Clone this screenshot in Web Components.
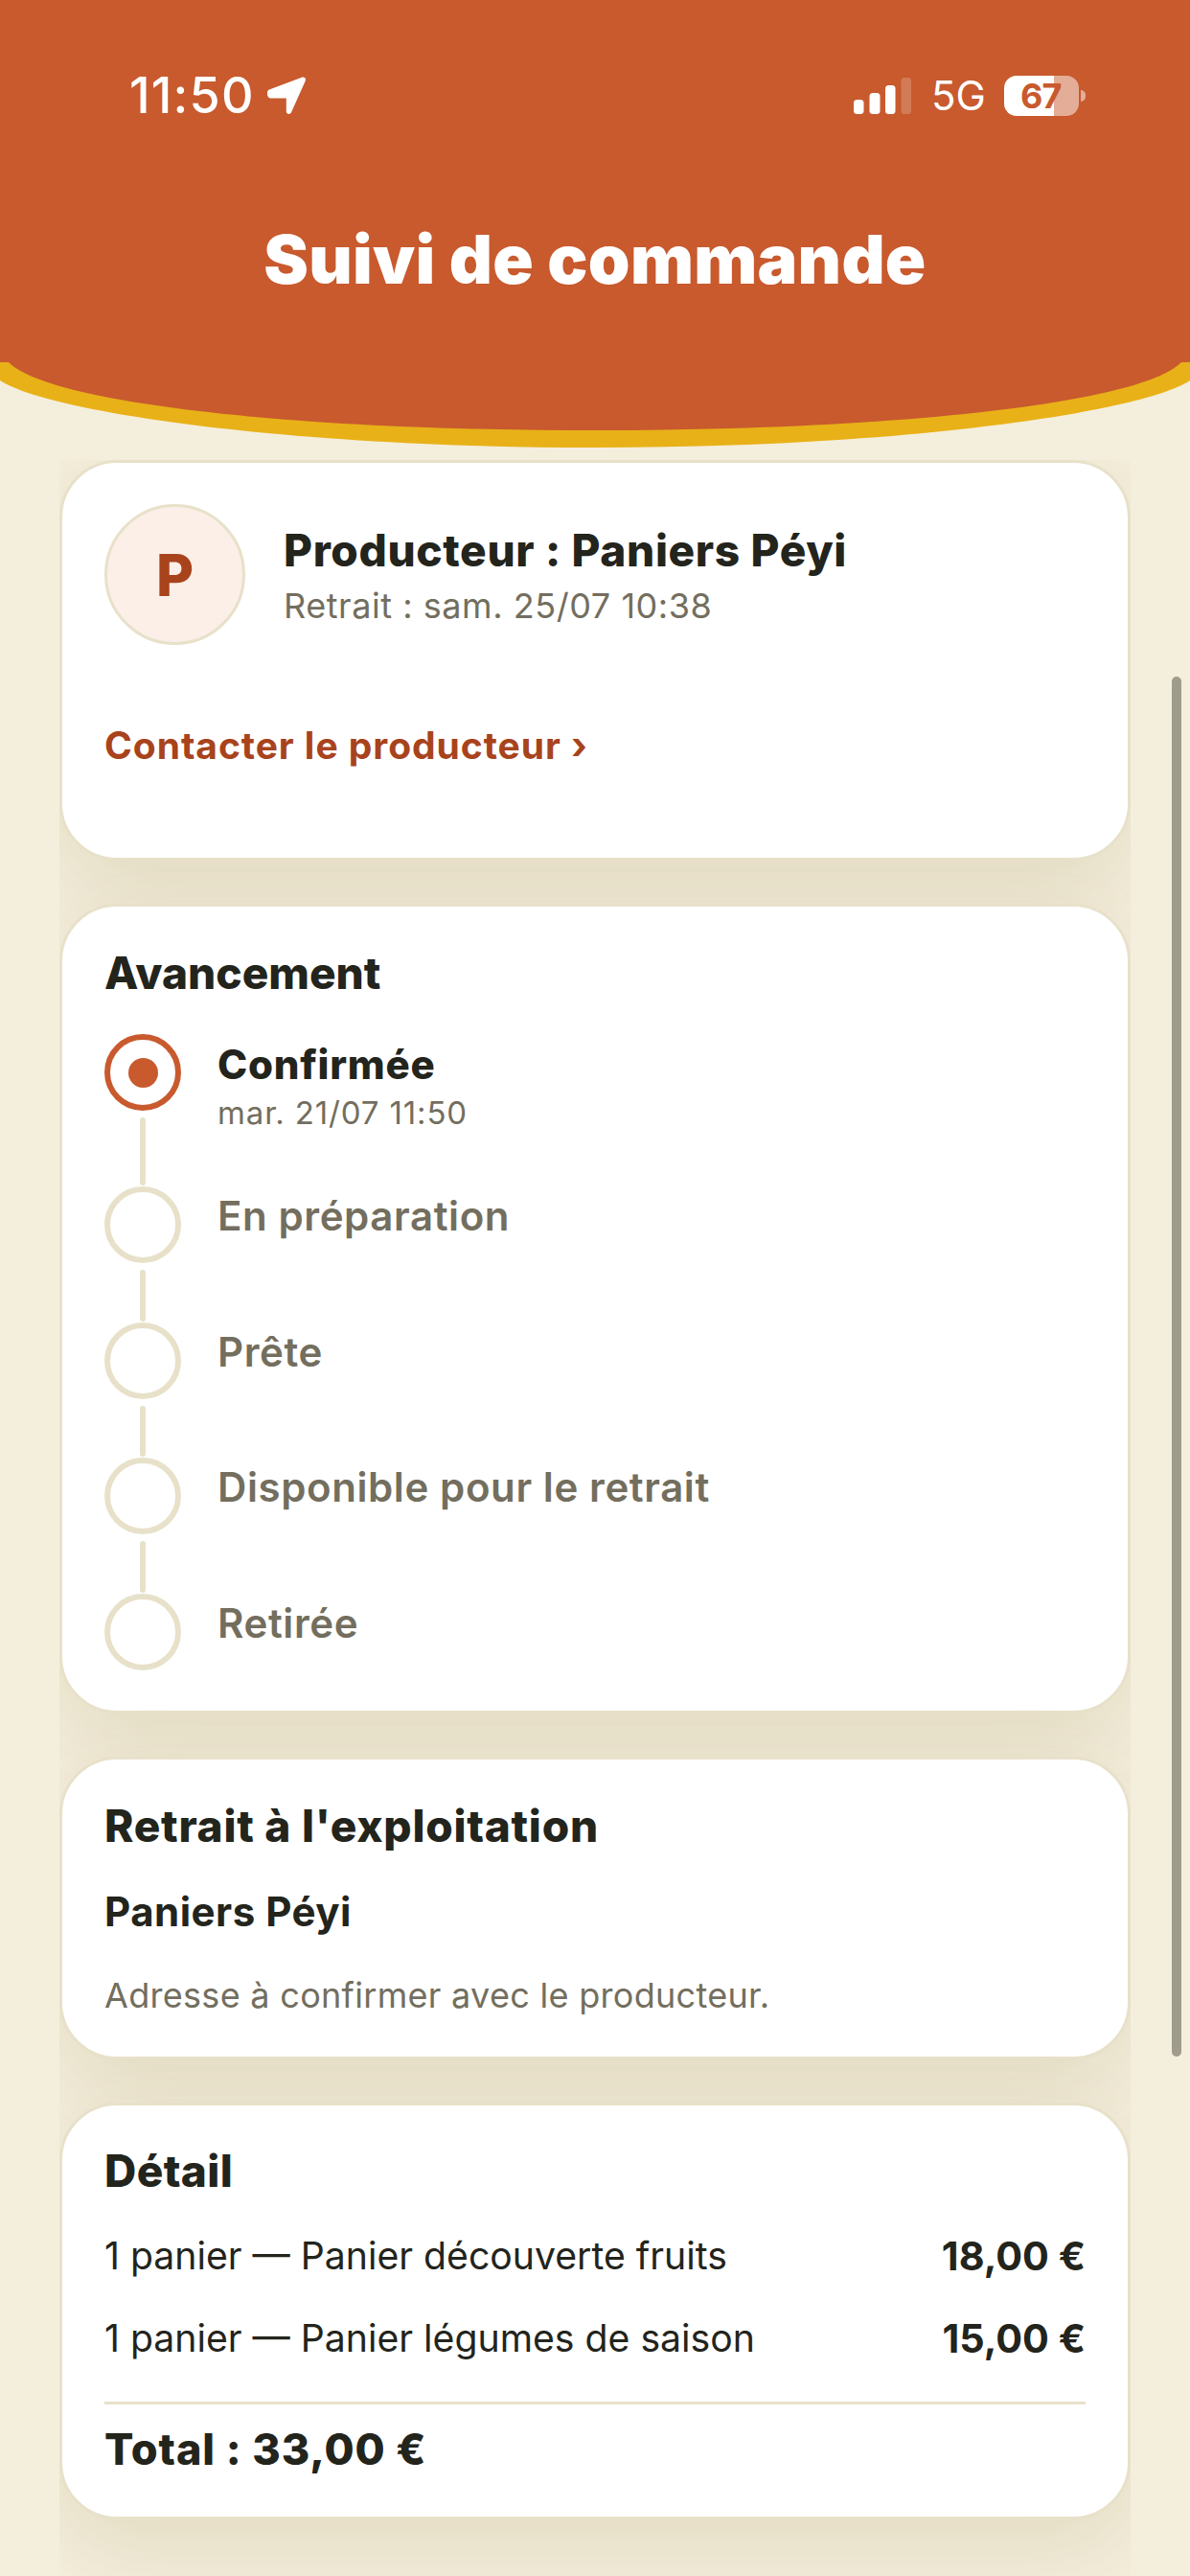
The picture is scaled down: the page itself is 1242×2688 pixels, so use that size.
<!DOCTYPE html>
<html lang="fr"><head><meta charset="utf-8">
<style>
html,body{margin:0;padding:0;background:#f4eedc}
body{width:1242px;height:2688px;overflow:hidden;font-family:Inter,"Liberation Sans",sans-serif;color:#23241c;position:relative}
</style></head><body>
<order-header></order-header>
<order-scroll>
  <order-card pad="43 44 45">
    <producer-block name="Producteur : Paniers Péyi" sub="Retrait : sam. 25/07 10:38" link="Contacter le producteur ›" initial="P"></producer-block>
  </order-card>
  <order-card pad="42 44 42.5">
    <card-title>Avancement</card-title>
    <order-steps>
      <order-step state="active" label="Confirmée" date="mar. 21/07 11:50"></order-step>
      <order-step label="En préparation"></order-step>
      <order-step label="Prête"></order-step>
      <order-step label="Disponible pour le retrait"></order-step>
      <order-step last label="Retirée"></order-step>
    </order-steps>
  </order-card>
  <order-card pad="42 44 42">
    <card-title style="letter-spacing:.75px">Retrait à l'exploitation</card-title>
    <pickup-info name="Paniers Péyi" note="Adresse à confirmer avec le producteur."></pickup-info>
  </order-card>
  <order-card pad="41 44 43">
    <card-title style="letter-spacing:.4px">Détail</card-title>
    <price-lines>
      <price-line label="1 panier — Panier découverte fruits" price="18,00 €"></price-line>
      <price-line label="1 panier — Panier légumes de saison" price="15,00 €"></price-line>
    </price-lines>
    <order-total>Total : 33,00 €</order-total>
  </order-card>
</order-scroll>
<scroll-thumb></scroll-thumb>
<script>
function def(name, css, html){
  customElements.define(name, class extends HTMLElement{
    connectedCallback(){
      if(this.shadowRoot) return;
      const r=this.attachShadow({mode:'open'});
      const a=n=>this.getAttribute(n)||'';
      r.innerHTML='<style>'+css+'</style>'+(typeof html==='function'?html(a):html);
    }
  });
}
def('status-bar',`
:host{display:flex;justify-content:space-between;align-items:flex-start;height:60px;color:#fff;font-family:Inter,sans-serif}
.l{display:flex;align-items:center;margin-left:135px;height:40px;gap:13px}
.t{font-size:52px;font-weight:500;line-height:40px;letter-spacing:1.2px}
.l svg{margin-top:-1px}
.r{display:flex;align-items:center;margin-right:109px;height:42px;margin-top:-1px}
.sig{width:60px;height:38px;margin-right:21px;display:block}
.g{font-size:42px;line-height:42px;font-weight:400;margin-right:22px;width:54px;white-space:nowrap}
.bat{width:78px;height:42px;border-radius:13px;position:relative;overflow:hidden;background:linear-gradient(90deg,#fff 0 52px,rgba(255,255,255,.5) 52px)}
.bat b{position:absolute;left:17px;top:0;line-height:42px;font-size:36px;font-weight:700;color:#c85a2e;letter-spacing:-1px}
.nub{width:5px;height:12px;margin-left:2px;background:rgba(255,255,255,.5);border-radius:0 6px 6px 0}
`,`<div class="l"><span class="t">11:50</span>
<svg width="41" height="40" viewBox="0 0 41 40"><path d="M2 13.500 36 .8c2.500-1 4.800 1 3.800 3.500L25 37.300c-1 2.600-5.200 2-5.200-.8V22.500H3.500C-.5 22.500-1.500 15 2 13.500Z" fill="#fff"/></svg></div>
<div class="r"><svg class="sig" viewBox="0 0 60 38"><rect x="0" y="23" width="10.500" height="15" rx="3.500" fill="#fff"/><rect x="16.500" y="16" width="11" height="22" rx="3.500" fill="#fff"/><rect x="33" y="8" width="10.500" height="30" rx="3.500" fill="#fff"/><rect x="49.500" y="0" width="10.500" height="38" rx="3.500" fill="#fff" fill-opacity=".2"/></svg>
<span class="g">5G</span><div class="bat"><b>67</b></div><div class="nub"></div></div>`);
def('order-header',`
:host{display:block;background:#c85a2e;height:378px;padding-top:80px;box-sizing:border-box;position:relative;z-index:2}
h1{margin:91px 0 0;font:900 70px/80px Inter,sans-serif;color:#fff;text-align:center;letter-spacing:.3px}
svg{position:absolute;left:0;top:378px;display:block}
`,`<status-bar></status-bar><h1>Suivi de commande</h1>
<svg width="1242" height="89" viewBox="0 378 1242 89"><path d="M0 378V397C50 430 300 467 621 467S1192 430 1242 397V378Z" fill="#e8b118"/><path d="M9 378C50 420 300 449 621 449S1192 420 1233 378Z" fill="#c85a2e"/></svg>`);
def('order-scroll',`
:host{display:flex;flex-direction:column;gap:45px;position:absolute;left:62px;width:1118px;top:480px;bottom:0;overflow:hidden}
`,`<slot></slot>`);
customElements.define('order-card',class extends HTMLElement{
  connectedCallback(){ if(this.shadowRoot) return;
    const p=this.getAttribute('pad').split(' ').map(v=>v+'px').join(' ');
    this.attachShadow({mode:'open'}).innerHTML=`<style>:host{display:block;flex:none;box-sizing:border-box;background:#fff;border:3px solid #e8e1ca;border-radius:60px;box-shadow:0 30px 90px rgba(110,85,0,.12);padding:${p}}</style><slot></slot>`;
  }
});
def('card-title',`:host{display:block;font:800 46px/54px Inter,sans-serif;color:#23241c}`,`<slot></slot>`);
def('producer-block',`
:host{display:block}
.top{display:flex;align-items:center;gap:40px}
.av{width:147px;height:147px;box-sizing:border-box;border:3px solid #e8e1ca;border-radius:50%;background:#fbefe8;color:#a8431c;font:800 60px/1 Inter,sans-serif;display:flex;align-items:center;justify-content:center}
.tx{padding-top:3px}
.n{font:800 46px/58px Inter,sans-serif;letter-spacing:.65px}
.s{font:400 36px/52px Inter,sans-serif;color:#736e5e;letter-spacing:.55px;margin-top:3px}
.l{margin-top:81px;margin-bottom:48px;font:700 39px/48px Inter,sans-serif;color:#a8431c;letter-spacing:.95px}
`,(a)=>`<div class="top"><div class="av">${a('initial')}</div><div class="tx"><div class="n">${a('name')}</div><div class="s">${a('sub')}</div></div></div><div class="l">${a('link')}</div>`);
def('order-steps',`:host{display:flex;flex-direction:column;margin-top:37px}`,`<slot></slot>`);
def('order-step',`
:host{display:flex;gap:38px;height:141.5px}
:host([state=active]){height:159px}
:host([last]){height:80px}
.rail{display:flex;flex-direction:column;align-items:center;width:80px;flex:none}
.dot{width:80px;height:80px;box-sizing:border-box;border:6px solid #e8e1ca;border-radius:50%;flex:none;display:flex;align-items:center;justify-content:center}
.line{width:6px;flex:1;background:#e8e1ca;border-radius:3px;margin:7px 0 1px}
:host([last]) .line{display:none}
.txt{padding-top:6px}
.lab{font:600 42px/50px Inter,sans-serif;color:#736e5e;letter-spacing:.6px}
.date{font:400 33px/50px Inter,sans-serif;color:#736e5e;letter-spacing:.85px}
:host([state=active]) .txt{padding-top:7px}
:host([state=active]) .dot{border-color:#c85a2e}
:host([state=active]) .dot::after{content:"";width:31px;height:31px;border-radius:50%;background:#c85a2e}
:host([state=active]) .lab{color:#23241c;font-weight:800;letter-spacing:.75px}
`,(a)=>`<div class="rail"><div class="dot"></div><div class="line"></div></div><div class="txt"><div class="lab">${a('label')}</div>${a('date')?`<div class="date">${a('date')}</div>`:''}</div>`);
def('pickup-info',`
:host{display:block}
.n{font:700 42px/50px Inter,sans-serif;margin-top:38px;letter-spacing:.5px}
.a{font:400 36px/44px Inter,sans-serif;color:#736e5e;margin-top:40px;letter-spacing:.3px}
`,(a)=>`<div class="n">${a('name')}</div><div class="a">${a('note')}</div>`);
def('price-lines',`:host{display:flex;flex-direction:column;margin-top:19px}`,`<slot></slot>`);
def('price-line',`
:host{display:flex;justify-content:space-between;align-items:center;height:86px;font:400 39.200px/48px Inter,sans-serif}
b{font-weight:700;font-size:41.300px}
`,(a)=>`<span>${a('label')}</span><b>${a('price')}</b>`);
def('order-total',`:host{display:block;border-top:3px solid #e8e1ca;margin-top:23px;padding-top:20px;font:800 45px/54px Inter,sans-serif;letter-spacing:.9px}`,`<slot></slot>`);
def('scroll-thumb',`:host{display:block;position:absolute;left:1223px;top:706px;width:10px;height:1440px;background:#a09c8c;border-radius:5px;z-index:3}`,``);
</script>
</body></html>
